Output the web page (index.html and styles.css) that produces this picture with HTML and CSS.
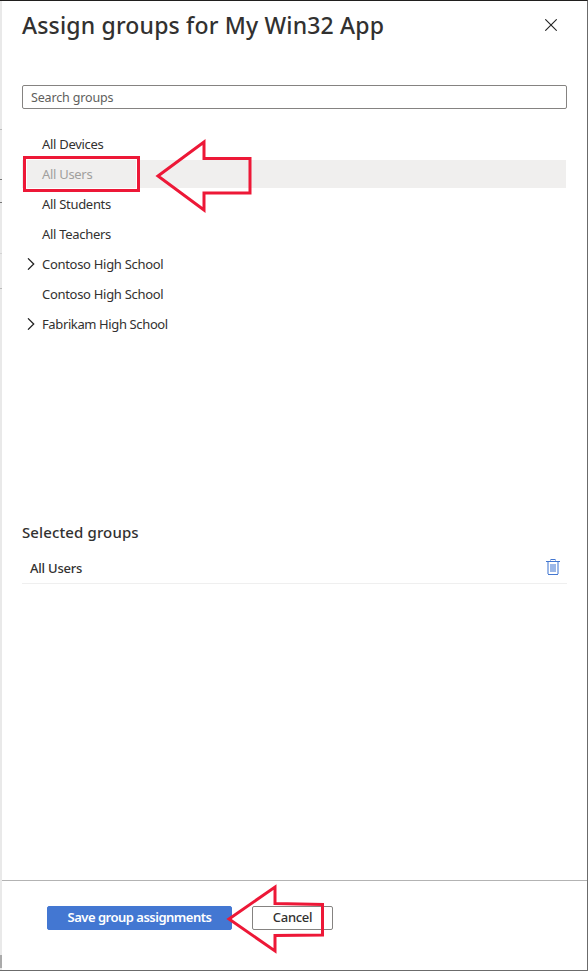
FILE: index.html
```html
<!DOCTYPE html>
<html lang="en">
<head>
<meta charset="utf-8">
<title>Assign groups</title>
<link rel="stylesheet" href="styles.css">
</head>
<body>
<div class="page">
  <div class="backdrop"><i class="tick t1"></i><i class="tick dark t2"></i><i class="tick dark t3"></i><i class="tick t4"></i><i class="tick t5"></i><i class="thumb"></i></div>
  <main class="panel">
    <header class="header">
      <h1 class="title">Assign groups for My Win32 App</h1>
      <svg class="close" viewBox="0 0 12 12"><path d="M.3.3 11.7 11.7M11.7.3.3 11.7"/></svg>
    </header>
    <div class="search"><span>Search groups</span></div>
    <ul class="groups">
      <li class="group"><span>All Devices</span></li>
      <li class="group selected"><span>All Users</span></li>
      <li class="group"><span>All Students</span></li>
      <li class="group"><span>All Teachers</span></li>
      <li class="group parent"><svg class="chevron" viewBox="0 0 8 12"><path d="M1 .4 6.7 6 1 11.6"/></svg><span>Contoso High School</span></li>
      <li class="group"><span>Contoso High School</span></li>
      <li class="group parent"><svg class="chevron" viewBox="0 0 8 12"><path d="M1 .4 6.7 6 1 11.6"/></svg><span class="fabrikam">Fabrikam High School</span></li>
    </ul>
    <section class="chosen">
      <h2 class="subtitle"><span>Selected groups</span></h2>
      <div class="chosen-row">
        <span>All Users</span>
        <svg class="trash" viewBox="0 0 14 16"><path class="soft" d="M4 5h6v8H4zM1 3h2v12H1zM11 3h2v12h-2zM4 0h1v2H4zM9 0h1v2H9z"/><path class="solid" d="M5 0h4v1H5zM0 2h14v1H0zM2 15h10v1H2z"/></svg>
      </div>
    </section>
    <footer class="footer">
      <button class="button primary">Save group assignments</button>
      <button class="button cancel">Cancel</button>
    </footer>
  </main>
  <div class="mark-box"></div>
  <svg class="mark-arrow first" viewBox="0 0 98 76"><path d="M3 38 49 4V20.500H95V55H49V72Z"/></svg>
  <svg class="mark-arrow second" viewBox="0 0 100 72"><path d="M3 36 49 4V20.500L96.500 21.500V52L49 52.500V68Z"/></svg>
</div>
</body>
</html>
```
FILE: styles.css
```css
* { box-sizing: border-box; }
body { margin: 0; background: #fff; color: #323130; font: 13px/18px "Noto Sans", "Open Sans", sans-serif; }
.page { position: relative; display: flex; width: 588px; height: 971px; border-top: 1px solid #201f1e; border-right: 1px solid #6b6b6b; border-bottom: 1px solid #6b6b6b; overflow: hidden; }
.backdrop { position: relative; width: 2px; background: #e9e9e9; }
.tick { position: absolute; left: 0; width: 2px; height: 1px; background: #bbb; }
.dark { background: #777; }
.t1 { top: 128px; }
.t2 { top: 178px; }
.t3 { top: 201px; }
.t4 { top: 252px; background: #d4d4d4; }
.t5 { top: 287px; }
.thumb { position: absolute; left: 0; top: 954px; width: 2px; height: 13px; background: #aaa; }
.panel { display: flex; flex: 1; flex-direction: column; }
.header { display: flex; justify-content: space-between; height: 84px; padding: 8px 30px 0 20px; }
.title { margin: 0; font-size: 23px; line-height: 32px; font-weight: 500; letter-spacing: .17px; white-space: nowrap; }
.close { width: 12px; height: 12px; margin-top: 10px; fill: none; stroke: #222; stroke-width: 1.1; }
.search { height: 24px; margin: 0 20px; padding: 3px 8px; border: 1px solid #858381; border-radius: 2px; color: #605e5c; line-height: 17px; font-size: 12.500px; letter-spacing: -.15px; }
.groups { display: grid; grid-auto-rows: 28px; row-gap: 2px; height: 393px; align-content: start; margin: 0; padding: 21px 21px 0 20px; list-style: none; letter-spacing: -.3px; }
.group { display: flex; align-items: center; padding-left: 20px; }
.selected { background: #f0efee; color: #a19f9d; }
.parent { padding-left: 5px; }
.fabrikam { letter-spacing: -.38px; }
.chevron { width: 8px; height: 12px; margin-right: 7px; fill: none; stroke: #222; stroke-width: 1.3; }
.chosen { flex: 1; margin: 0 20px; padding-top: 18px; }
.subtitle { margin: 0; font-size: 15px; line-height: 24px; font-weight: 500; letter-spacing: .12px; }
.chosen-row { display: flex; align-items: center; justify-content: space-between; height: 30px; margin-top: 10px; padding: 0 7px 1px 8px; border-bottom: 1px solid #efefef; font-weight: 500; letter-spacing: -.22px; }
.trash { width: 14px; height: 16px; margin-top: -2px; }
.soft { fill: #9cb8e8; }
.solid { fill: #4477d0; }
.footer { display: flex; align-items: flex-start; gap: 20px; height: 90px; padding: 25px 45px 0; border-top: 1px solid #b3b3b3; }
.button { height: 24px; padding: 0 0 2px; border: 1px solid #858381; border-radius: 2px; background: #fff; color: #323130; font: 500 13px/18px "Noto Sans", "Open Sans", sans-serif; letter-spacing: -.3px; white-space: nowrap; }
.primary { width: 185px; border-color: #4377d2; background: #4377d2; color: #fff; font-weight: 600; letter-spacing: -.5px; }
.cancel { width: 81px; }
.mark-box { position: absolute; left: 23px; top: 155px; width: 117px; height: 36px; border: 3px solid #ed1837; box-shadow: inset 0 0 0 1px #fff; }
.mark-arrow { position: absolute; fill: none; stroke: #ed1837; stroke-width: 3; }
.first { left: 155px; top: 137px; width: 98px; height: 76px; }
.second { left: 226px; top: 882px; width: 100px; height: 72px; }
```
